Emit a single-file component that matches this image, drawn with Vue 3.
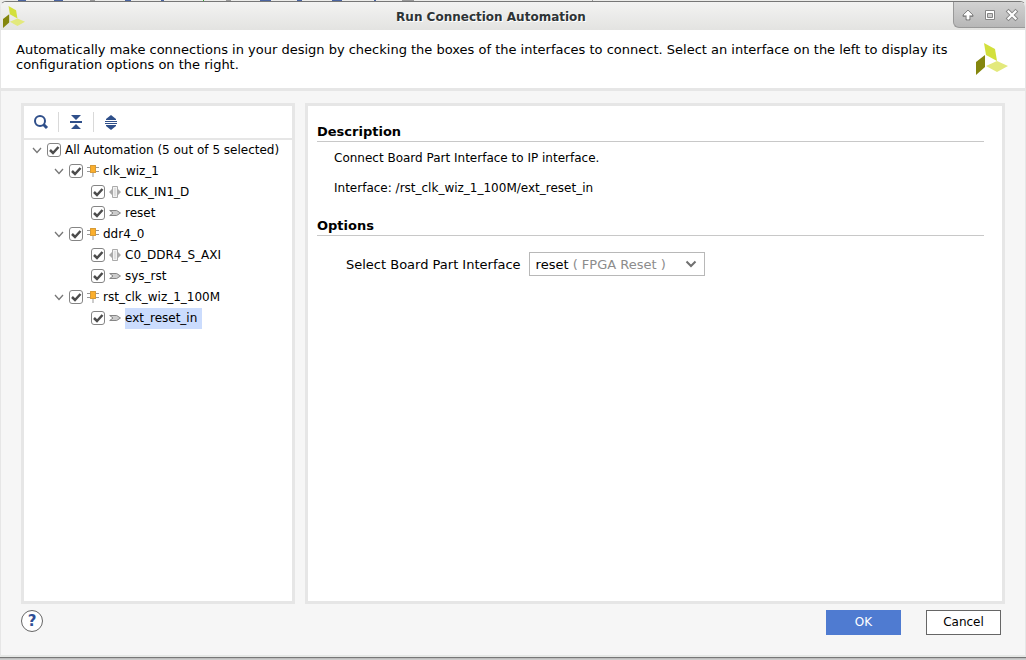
<script setup>
import { ref } from 'vue'

const rows = ref([
  { id: 'all', level: 0, label: 'All Automation (5 out of 5 selected)', checked: true },
  { id: 'clk', level: 1, icon: 'cell', label: 'clk_wiz_1', checked: true },
  { id: 'clkin', level: 2, icon: 'bus', label: 'CLK_IN1_D', checked: true },
  { id: 'reset', level: 2, icon: 'pin', label: 'reset', checked: true },
  { id: 'ddr', level: 1, icon: 'cell', label: 'ddr4_0', checked: true },
  { id: 'axi', level: 2, icon: 'bus', label: 'C0_DDR4_S_AXI', checked: true },
  { id: 'sysrst', level: 2, icon: 'pin', label: 'sys_rst', checked: true },
  { id: 'rst', level: 1, icon: 'cell', label: 'rst_clk_wiz_1_100M', checked: true },
  { id: 'ext', level: 2, icon: 'pin', label: 'ext_reset_in', checked: true },
])
const selected = ref('ext')
const board = ref('reset')
</script>

<template>
  <div class="screen">
    <div class="behind" aria-hidden="true">
      <svg width="600" height="1" shape-rendering="crispEdges">
        <path d="M18 .5h8M54 .5h9M125 .5h6M161 .5h3M260 .5h11M297 .5h5M332 .5h10M374 .5h2" stroke="#4a64a0" />
        <path d="M90 .5h5M226 .5h5M402 .5h12M592 .5h1" stroke="#999" />
        <path d="M203 .5h1" stroke="#3a3" />
      </svg>
    </div>
    <div class="dialog" role="dialog" aria-labelledby="dialog-title">
      <header class="titlebar">
        <svg class="app-icon" width="22" height="22" viewBox="0 0 32 32" aria-hidden="true">
          <path d="M8 0l11 6 2 12-11-6z" fill="#d3e03c" />
          <path d="M0 19l9-7v12l-9 8z" fill="#84860d" />
          <path d="M10 23l11-5 11 5-11 6z" fill="#e3e97c" />
        </svg>
        <h1 id="dialog-title">Run Connection Automation</h1>
        <div class="window-buttons">
          <button type="button" aria-label="Shade">
            <svg width="14" height="14" viewBox="0 0 14 14"><path d="M7 2L2 7v1.500h3V12h4V8.500h3V7z" fill="#858585" stroke="#858585" stroke-linejoin="round" /><path d="M7 3L3 7h3v4h2V7h3z" fill="#fff" stroke="#fff" stroke-width=".8" /></svg>
          </button>
          <button type="button" aria-label="Maximize">
            <svg width="14" height="14" viewBox="0 0 14 14"><path d="M2.500 2.500h9v9h-9z" fill="#fff" stroke="#858585" /><path d="M4.500 5.500h5v4h-5z" fill="#ccc" stroke="#858585" /></svg>
          </button>
          <button type="button" aria-label="Close">
            <svg width="14" height="14" viewBox="0 0 14 14"><path d="M3.500 3.500l7 7M10.500 3.500l-7 7" stroke="#858585" stroke-width="4" stroke-linecap="square" /><path d="M3.500 3.500l7 7M10.500 3.500l-7 7" stroke="#fff" stroke-width="2.200" stroke-linecap="square" /></svg>
          </button>
        </div>
      </header>

      <section class="intro">
        <p>Automatically make connections in your design by checking the boxes of the interfaces to connect. Select an interface on the left to display its configuration options on the right.</p>
        <svg width="32" height="32" viewBox="0 0 32 32" aria-hidden="true">
          <path d="M8 0l11 6 2 12-11-6z" fill="#d3e03c" />
          <path d="M0 19l9-7v12l-9 8z" fill="#84860d" />
          <path d="M10 23l11-5 11 5-11 6z" fill="#e3e97c" />
        </svg>
      </section>

      <main class="content">
        <section class="panel tree-panel">
          <div class="toolbar">
            <button type="button" aria-label="Search">
              <svg width="16" height="16" viewBox="0 0 16 16"><circle cx="7" cy="7" r="5" fill="none" stroke="#2f4f8a" stroke-width="2" /><path d="M10.500 10.500l3.500 3.500" stroke="#2f4f8a" stroke-width="3" /></svg>
            </button>
            <button type="button" aria-label="Collapse all">
              <svg width="16" height="16" viewBox="0 0 16 16" fill="#2f4f8a"><path d="M3 1h10L8 6zM2 7h12v2H2zM8 10l5 5H3z" /></svg>
            </button>
            <button type="button" aria-label="Expand all">
              <svg width="16" height="16" viewBox="0 0 16 16" fill="#2f4f8a"><path d="M8 1l5 4v1H3V5zM2 7h12v1H2zM2 9h12v1H2zM3 11h10v1l-5 4-5-4z" /></svg>
            </button>
          </div>
          <ul class="tree">
            <li v-for="row in rows" :key="row.id" :class="['row', 'level-' + row.level]">
              <button v-if="row.level < 2" type="button" class="expander" :aria-label="'Collapse ' + row.label">
                <svg width="11" height="14" viewBox="0 0 11 14"><path d="M1 5l4 4.500L9 5" fill="none" stroke="#777" stroke-width="1.300" /></svg>
              </button>
              <span class="check">
                <input :id="row.id" v-model="row.checked" type="checkbox" />
                <svg v-if="row.checked" width="14" height="14" viewBox="0 0 14 14" aria-hidden="true"><path d="M3 7l3 3 5.500-6" fill="none" stroke="#4c4c4c" stroke-width="2.500" /></svg>
              </span>
              <svg v-if="row.icon === 'cell'" class="kind" width="12" height="14" viewBox="0 0 12 14" aria-hidden="true">
                <path d="M0 3.500h12M0 7.500h12M6 9v4" stroke="#999" />
                <path d="M3 1h6v8H3z" fill="#fbaf2d" /><path d="M3.500 1.500h5v7h-5z" fill="none" stroke="#d59a39" />
              </svg>
              <svg v-else-if="row.icon === 'bus'" class="kind" width="12" height="14" viewBox="0 0 12 14" aria-hidden="true">
                <path d="M0 7l3-3v6zM12 7L9 4v6z" fill="#aaa" />
                <path d="M3.500 1.500h5v11h-5z" fill="#f2f2f2" stroke="#aaa" /><path d="M6 3v8" stroke="#ccc" />
              </svg>
              <svg v-else-if="row.icon === 'pin'" class="kind" width="12" height="14" viewBox="0 0 12 14" aria-hidden="true">
                <path d="M.7 4.500h7L11.500 7 7.700 9.500h-7L4 7z" fill="#ccc" stroke="#868686" />
              </svg>
              <label :for="row.id" :class="{ selected: selected === row.id }" @click="selected = row.id">{{ row.label }}</label>
            </li>
          </ul>
        </section>

        <section class="panel detail-panel">
          <h2>Description</h2>
          <div class="description">
            <p>Connect Board Part Interface to IP interface.</p>
            <p>Interface: /rst_clk_wiz_1_100M/ext_reset_in</p>
          </div>
          <h2>Options</h2>
          <div class="option">
            <label for="board">Select Board Part Interface</label>
            <div class="combo">
              <select id="board" v-model="board">
                <option value="reset">reset ( FPGA Reset )</option>
              </select>
              <span class="value" aria-hidden="true">reset <span class="hint">( FPGA Reset )</span></span>
              <svg width="12" height="8" viewBox="0 0 12 8" aria-hidden="true"><path d="M1.500 1.500L6 6l4.500-4.500" fill="none" stroke="#707070" stroke-width="2" /></svg>
            </div>
          </div>
        </section>
      </main>

      <footer class="actions">
        <button type="button" class="help" aria-label="Help">?</button>
        <button type="button" class="action primary">OK</button>
        <button type="button" class="action">Cancel</button>
      </footer>
    </div>
    <div class="shadow" aria-hidden="true"></div>
  </div>
</template>

<style>
body {
  margin: 0;
}
</style>

<style scoped>
.screen {
  display: flex;
  flex-direction: column;
  min-height: 100vh;
  font-family: "DejaVu Sans", sans-serif;
  font-size: 12px;
  line-height: 15px;
  color: #000;
  background: #ececea;
}
.screen * {
  box-sizing: border-box;
}
button {
  padding: 0;
  border: 0;
  background: none;
  font: inherit;
  color: inherit;
}
svg {
  display: block;
  flex: none;
}
h1, h2, p, ul {
  margin: 0;
  padding: 0;
}
.behind {
  height: 1px;
  overflow: hidden;
}
.dialog {
  flex: 1;
  display: flex;
  flex-direction: column;
  border: 1px solid #e6e6e6;
  border-top-color: #777;
  border-bottom: 2px solid #e6e8e6;
  border-radius: 6px 6px 0 0;
  background: #f6f6f6;
}
.titlebar {
  display: grid;
  grid-template-columns: 28px 1fr 72px;
  align-items: start;
  height: 28px;
  border-radius: 5px 5px 0 0;
  background: linear-gradient(#f3f3f2, #e3e3e1);
}
.app-icon {
  margin: 4px 2px;
}
h1 {
  font-size: 12px;
  line-height: 30px;
  text-align: center;
  color: #2e3436;
  text-shadow: 1px 1px #fff;
}
.window-buttons {
  display: flex;
  justify-content: space-between;
  align-items: center;
  height: 26px;
  padding: 1px 6px 0 7px;
  border: 1px solid #999;
  border-width: 0 0 1px 1px;
  border-radius: 0 5px 0 6px;
  background: linear-gradient(#d2d2d2, #b7b7b7);
}
.intro {
  display: flex;
  justify-content: space-between;
  gap: 20px;
  padding: 12px 17px 13px 15px;
  border-bottom: 3px solid #e6e6e6;
  background: #fff;
  font-size: 13px;
}
.intro p {
  max-width: 940px;
}
.intro svg {
  margin-top: 1px;
}
.content {
  flex: 1;
  display: flex;
  gap: 10px;
  padding: 12px 20px 0;
}
.panel {
  border: 3px solid #e6e6e6;
  background: #fff;
}
.tree-panel {
  flex: none;
  width: 274px;
}
.detail-panel {
  flex: 1;
  padding: 18px 18px 0 9px;
}
.toolbar {
  display: flex;
  align-items: center;
  height: 34px;
  border-bottom: 2px solid #e6e6e6;
}
.toolbar button {
  display: grid;
  place-items: center;
  width: 35px;
  height: 20px;
}
.toolbar button:first-child {
  width: 34px;
}
.toolbar button + button {
  border-left: 1px solid #d9d9d9;
}
.tree {
  list-style: none;
}
.row {
  display: flex;
  align-items: center;
  gap: 4px;
  height: 21px;
  white-space: nowrap;
}
.row > button,
.row > span,
.row > svg {
  margin-bottom: 1px;
}
.level-0 {
  padding-left: 8px;
}
.level-1 {
  padding-left: 30px;
}
.level-2 {
  padding-left: 67px;
}
.check {
  display: grid;
  width: 14px;
  height: 14px;
}
.check > * {
  grid-area: 1 / 1;
}
.check svg {
  pointer-events: none;
}
.check input {
  appearance: none;
  width: 14px;
  height: 14px;
  margin: 0;
  border: 1px solid #858585;
  border-radius: 3px;
  background: #fff;
}
.row label {
  height: 21px;
  line-height: 21px;
  padding-right: 5px;
}
.row .selected {
  background: #cbdcfd;
}
h2 {
  padding-bottom: 1px;
  border-bottom: 1px solid #c8c8c8;
  font-size: 13px;
  line-height: 16px;
}
.description {
  display: grid;
  gap: 15px;
  padding: 9px 17px 22px;
}
.option {
  display: flex;
  align-items: center;
  gap: 8px;
  padding: 16px 29px;
  font-size: 13px;
}
.combo {
  display: grid;
  align-items: center;
  width: 176px;
  height: 24px;
}
.combo > * {
  grid-area: 1 / 1;
}
.combo select {
  appearance: none;
  width: 100%;
  height: 100%;
  padding: 0 6px;
  border: 1px solid #b8b8b8;
  border-radius: 0;
  background: #fff;
  font: inherit;
  color: transparent;
}
.combo option {
  color: #000;
}
.value {
  padding-left: 7px;
  pointer-events: none;
}
.hint {
  color: #8c8c8c;
}
.combo svg {
  justify-self: end;
  margin-right: 8px;
  pointer-events: none;
}
.actions {
  display: flex;
  align-items: flex-start;
  gap: 25px;
  padding: 6px 24px 20px 20px;
}
.help {
  width: 22px;
  height: 22px;
  margin-right: auto;
  border: 1px solid #666;
  border-radius: 50%;
  background: #fff;
  font-size: 15px;
  font-weight: bold;
  color: #2f4f96;
}
.action {
  width: 75px;
  height: 25px;
  border: 1px solid #666;
  background: #fff;
}
.primary {
  border-color: #4f7bd1;
  background: #4f7bd1;
  color: #fff;
}
.shadow {
  height: 3px;
  border-top: 1px solid #777;
  background: linear-gradient(#b5b5b5, #d5d5d5);
  box-sizing: border-box;
}
</style>
